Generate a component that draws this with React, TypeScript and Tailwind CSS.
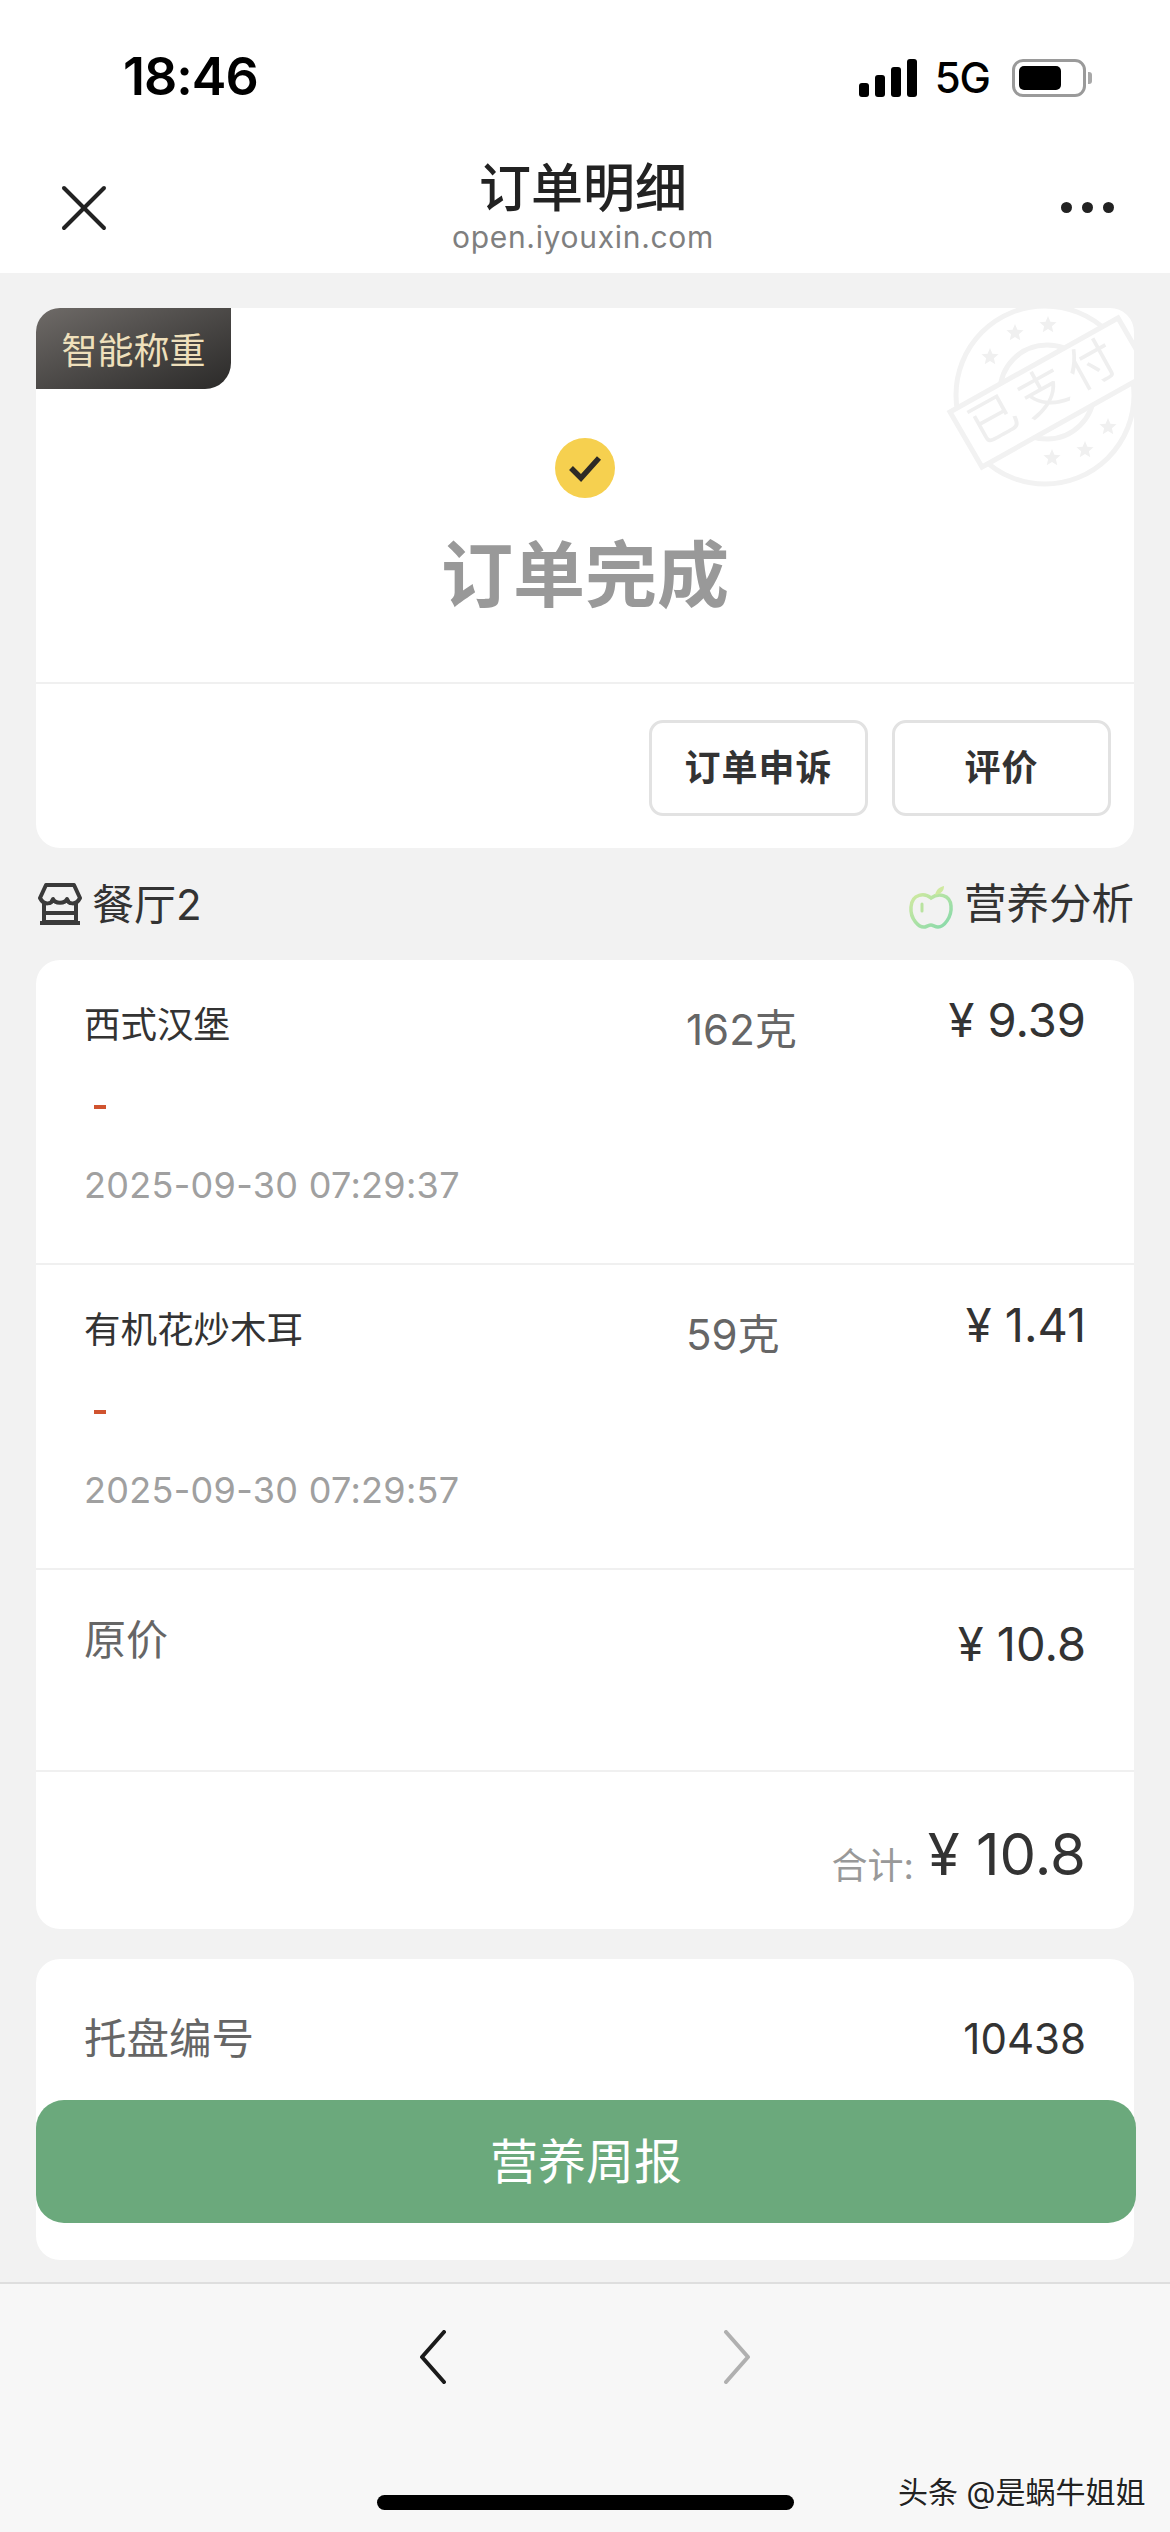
import React from 'react';
import { X } from 'lucide-react';

const StatusBar: React.FC = () => (
  <div className="flex h-[136px] items-start justify-between bg-white pl-[123px] pr-[78px] pt-[49px]">
    <span className="text-[52px] font-semibold leading-[56px] tracking-[-1px] text-black">18:46</span>
    <div className="flex items-center pt-[9px]">
      <div className="flex items-end gap-[6px]">
        <div className="h-[14px] w-[10px] rounded-[3px] bg-black" />
        <div className="h-[22px] w-[10px] rounded-[3px] bg-black" />
        <div className="h-[30px] w-[10px] rounded-[3px] bg-black" />
        <div className="h-[38px] w-[10px] rounded-[3px] bg-black" />
      </div>
      <span className="ml-[18px] text-[42px] font-medium leading-[40px] tracking-[-1px] text-black">5G</span>
      <div className="ml-[22px] flex items-center">
        <div className="h-[38px] w-[74px] rounded-[11px] border-[3px] border-[#9a9a9a] p-[4px]">
          <div className="h-full w-[42px] rounded-[5px] bg-black" />
        </div>
        <div className="ml-[2px] h-[12px] w-[4px] rounded-r-[3px] bg-[#a8a8a8]" />
      </div>
    </div>
  </div>
);

const NavBar: React.FC = () => (
  <div className="flex h-[137px] items-start justify-between bg-white pl-[44px] pr-[56px]">
    <div className="w-[128px]">
      <X size={80} strokeWidth={1.2} className="mt-[32px] text-[#222]" />
    </div>
    <div className="flex flex-col items-center pt-[23px]">
      <span className="text-[52px] font-medium leading-[60px] text-[#222]">订单明细</span>
      <span className="text-[30px] leading-[36px] tracking-[0.7px] text-[#7f7f7f]">open.iyouxin.com</span>
    </div>
    <div className="mt-[66px] flex w-[120px] justify-end gap-[10px]">
      <div className="size-[11px] rounded-full bg-[#222]" />
      <div className="size-[11px] rounded-full bg-[#222]" />
      <div className="size-[11px] rounded-full bg-[#222]" />
    </div>
  </div>
);

const starPoints = (cx: number, cy: number, r: number) => {
  const pts: string[] = [];
  for (let i = 0; i < 10; i++) {
    const rad = i % 2 === 0 ? r : r * 0.45;
    const a = (Math.PI / 5) * i - Math.PI / 2;
    pts.push(`${cx + rad * Math.cos(a)},${cy + rad * Math.sin(a)}`);
  }
  return pts.join(' ');
};

// faint "paid" stamp in the card corner
const PaidStamp: React.FC = () => (
  <svg className="absolute right-0 top-0" width="194" height="190" viewBox="0 0 194 190">
    <circle cx="105" cy="87" r="89" fill="none" stroke="#f2f2f2" strokeWidth="5" />
    <circle cx="107" cy="84" r="47" fill="none" stroke="#f2f2f2" strokeWidth="5" />
    {[
      [108, 17],
      [75, 25],
      [50, 49],
      [168, 119],
      [145, 142],
      [112, 150],
    ].map(([x, y]) => (
      <polygon key={`${x}-${y}`} points={starPoints(x, y, 9)} fill="#f0f0f0" />
    ))}
    <polygon points="10,104 178,10 210,65 42,159" fill="#ffffff" stroke="#f2f2f2" strokeWidth="5" />
    <text
      x="107"
      y="99"
      textAnchor="middle"
      transform="rotate(-29 107 84)"
      fontSize="48"
      letterSpacing="8"
      fill="#efefef"
    >
      已支付
    </text>
  </svg>
);

const StatusCard: React.FC = () => (
  <div className="relative overflow-hidden rounded-[24px] bg-white">
    <PaidStamp />
    <div className="absolute left-0 top-0 flex h-[81px] w-[195px] items-center justify-center rounded-br-[26px] bg-gradient-to-br from-[#6f6b68] to-[#2b2a29] pt-[4px] text-[36px] text-[#efe0bc]">
      智能称重
    </div>
    <div className="flex h-[374px] flex-col items-center pt-[130px]">
      <div className="flex size-[60px] items-center justify-center rounded-full bg-[#f6d04f]">
        <svg width="34" height="28" viewBox="0 0 34 28">
          <path d="M3 14 L13 24 L31 4" fill="none" stroke="#2d2a26" strokeWidth="5.5" />
        </svg>
      </div>
      <span className="mt-[33px] text-[72px] font-bold leading-[88px] text-[#999]">订单完成</span>
    </div>
    <div className="flex h-[166px] justify-end gap-[24px] border-t-2 border-[#f0f0f0] pr-[23px] pt-[36px]">
      <div className="flex h-[96px] w-[219px] items-center justify-center rounded-[14px] border-[3px] border-[#e2e2e2] text-[36px] font-semibold tracking-[1px] text-[#333]">
        订单申诉
      </div>
      <div className="flex h-[96px] w-[219px] items-center justify-center rounded-[14px] border-[3px] border-[#e2e2e2] text-[36px] font-semibold tracking-[1px] text-[#333]">
        评价
      </div>
    </div>
  </div>
);

const StoreIcon: React.FC = () => (
  <svg width="44" height="44" viewBox="0 0 44 44" fill="none" stroke="#3a3a3a" strokeWidth="4" strokeLinejoin="round">
    <path d="M8 3 H36 L42 16 C38 24 30 22 29 17 C27 22 17 22 15 17 C14 22 6 24 2 16 Z" />
    <path d="M6 20 V40 H38 V20" />
    <path d="M6 31 H38" />
    <path d="M2 41 H42" />
  </svg>
);

const AppleIcon: React.FC = () => (
  <svg width="46" height="46" viewBox="0 0 46 46" fill="none" className="mt-[6px]">
    <defs>
      <linearGradient id="apple-stroke" x1="0" y1="0" x2="1" y2="1">
        <stop offset="0" stopColor="#cfe9a0" />
        <stop offset="1" stopColor="#86d9ab" />
      </linearGradient>
    </defs>
    <path
      d="M23 14 C17 9 4 9 3 23 C2 35 11 44 17 43 C20 42 21 41 23 41 C25 41 27 43 30 43 C36 43 44 33 43 22 C42 10 30 9 23 14 Z"
      stroke="url(#apple-stroke)"
      strokeWidth="3.5"
    />
    <path d="M27 11 C28 6 31 3 36 2 C36 7 33 10 27 11 Z" fill="#cfe9a0" />
    <path d="M14 20 V27" stroke="#b9e3a0" strokeWidth="3" strokeLinecap="round" />
  </svg>
);

const SectionHeader: React.FC = () => (
  <div className="flex h-[112px] items-center justify-between">
    <div className="flex items-center pl-[2px]">
      <StoreIcon />
      <span className="ml-[10px] text-[42px] text-[#333]">餐厅2</span>
    </div>
    <div className="flex items-center">
      <AppleIcon />
      <span className="ml-[10px] text-[42.5px] text-[#333]">营养分析</span>
    </div>
  </div>
);

interface Item {
  name: string;
  weight: string;
  price: string;
  time: string;
}

const items: Item[] = [
  { name: '西式汉堡', weight: '162克', price: '¥ 9.39', time: '2025-09-30 07:29:37' },
  { name: '有机花炒木耳', weight: '59克', price: '¥ 1.41', time: '2025-09-30 07:29:57' },
];

const ItemRow: React.FC<{ item: Item }> = ({ item }) => (
  <div className="relative h-[305px] border-b-2 border-[#f0f0f0] pl-[48px] pr-[48px] pt-[40px]">
    <div className="flex items-start">
      <span className="w-[602px] text-[36.5px] leading-[50px] text-[#333]">{item.name}</span>
      <span className="mt-[5px] text-[42px] leading-[50px] text-[#666]">{item.weight}</span>
      <span className="ml-auto mt-[-8px] text-[47px] leading-[56px] text-[#333]">{item.price}</span>
    </div>
    <div className="ml-[10px] mt-[50px] h-[4px] w-[12px] bg-[#d0532f]" />
    <div className="mt-[54px] text-[36px] leading-[44px] tracking-[0.3px] text-[#a0a0a0]">{item.time}</div>
  </div>
);

const OrderCard: React.FC = () => (
  <div className="overflow-hidden rounded-[24px] bg-white">
    {items.map((item) => (
      <ItemRow key={item.time} item={item} />
    ))}
    <div className="flex h-[202px] items-start justify-between border-b-2 border-[#f0f0f0] px-[48px] pt-[40px]">
      <span className="text-[42px] leading-[60px] text-[#666]">原价</span>
      <span className="mt-[4px] text-[47px] leading-[60px] text-[#333]">¥ 10.8</span>
    </div>
    <div className="flex h-[157px] items-start justify-end px-[48px] pt-[47px]">
      <span className="mt-[17px] text-[36px] leading-[60px] text-[#999]">合计:</span>
      <span className="ml-[14px] text-[58px] leading-[70px] text-[#333]">¥ 10.8</span>
    </div>
  </div>
);

const InfoCard: React.FC = () => (
  <div className="mt-[30px] flex h-[301px] items-start justify-between rounded-[24px] bg-white px-[48px] pt-[50px]">
    <span className="text-[42.5px] leading-[60px] text-[#666]">托盘编号</span>
    <span className="text-[42px] leading-[60px] text-[#333]">10438</span>
  </div>
);

const Chevron: React.FC<{ d: string; color: string }> = ({ d, color }) => (
  <svg width="30" height="54" viewBox="0 0 30 54" fill="none" stroke={color} strokeWidth="4" strokeLinecap="round" strokeLinejoin="round">
    <path d={d} />
  </svg>
);

const BottomBar: React.FC = () => (
  <div className="relative flex h-[250px] gap-[274px] border-t-2 border-[#dedede] bg-[#f7f7f7] pl-[418px] pt-[46px]">
    <Chevron d="M26 2 L4 27 L26 52" color="#1a1a1a" />
    <Chevron d="M4 2 L26 27 L4 52" color="#b0b0b0" />
    <div className="absolute left-[377px] top-[211px] h-[15px] w-[417px] rounded-full bg-black" />
    <span className="absolute left-[898px] top-[188px] text-[30px] leading-[40px] text-[#222] [text-shadow:1px_1px_0_#fff]">
      头条 @是蜗牛姐姐
    </span>
  </div>
);

export default function App() {
  return (
    <div className="relative flex h-[2532px] w-[1170px] flex-col overflow-hidden bg-[#f2f2f2] font-['Inter','Noto_Sans_CJK_SC',sans-serif]">
      <StatusBar />
      <NavBar />
      <div className="h-[2009px] overflow-hidden px-[36px] pt-[35px]">
        <StatusCard />
        <SectionHeader />
        <OrderCard />
        <InfoCard />
      </div>
      <BottomBar />
      {/* floating action button over the list */}
      <div className="absolute left-[36px] top-[2100px] flex h-[123px] w-[1100px] items-center justify-center rounded-[28px] bg-[#6ba97c] text-[48px] text-white">
        营养周报
      </div>
    </div>
  );
}
